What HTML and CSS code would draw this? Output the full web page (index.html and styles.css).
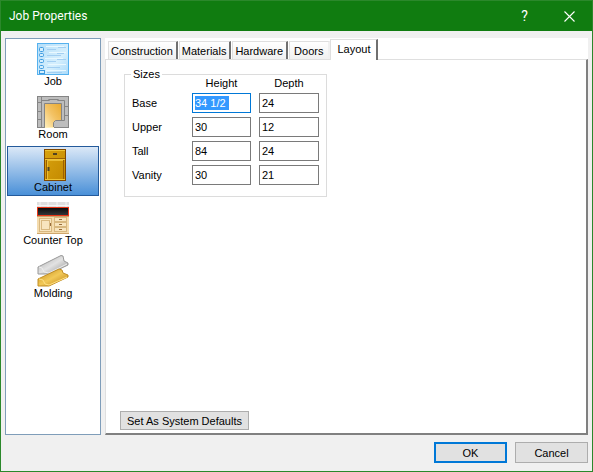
FILE: index.html
```html
<!DOCTYPE html>
<html lang="en">
<head>
<meta charset="utf-8">
<title>Job Properties</title>
<link rel="stylesheet" href="styles.css">
</head>
<body>
<main class="window">
  <header class="titlebar">
    <h1 class="title">Job Properties</h1>
    <button class="caption-button" type="button">?</button>
    <button class="caption-button" type="button" aria-label="Close">
      <svg width="11" height="11" viewBox="0 0 11 11"><path d="M.5.5l10 10M10.5.5l-10 10" stroke="#fff" stroke-width="1.1"/></svg>
    </button>
  </header>
  <div class="content">
    <nav class="sidebar">
      <button class="item" type="button">
        <svg class="icon" viewBox="0 0 32 32">
          <defs><linearGradient id="sheet" x2="1" y2="1"><stop stop-color="#b4def9"/><stop offset=".6" stop-color="#d5effd"/><stop offset="1" stop-color="#a9dafa"/></linearGradient></defs>
          <rect x=".5" y=".5" width="31" height="31" fill="url(#sheet)" stroke="#55b1ee"/>
          <path d="M10 6.500h9M21 4.500h8M10 12.500h14M20 10.500h7M10 18.500h9M20 16.500h9M10 24.500h13M10 29.500h15" stroke="#a3cff2"/>
          <path d="M9 3.500h18M12 9.500h17M8 15.500h18M11 21.500h18M9 27.500h20" stroke="#e9f8ff"/>
          <g fill="#d5effd" stroke="#3d9be0"><rect x="2.500" y="4.500" width="4" height="4" rx="1"/><rect x="2.500" y="10.500" width="4" height="3" rx="1"/><rect x="2.500" y="16.500" width="4" height="3" rx="1"/><rect x="2.500" y="22.500" width="4" height="3" rx="1"/><rect x="2.500" y="27.500" width="5" height="3"/></g>
        </svg>
        <span>Job</span>
      </button>
      <button class="item" type="button">
        <svg class="icon" viewBox="0 0 32 32">
          <defs><linearGradient id="floor" x1="1" x2="0" y2="1"><stop stop-color="#e9a92c"/><stop offset=".5" stop-color="#f3c366"/><stop offset="1" stop-color="#fff0bd"/></linearGradient></defs>
          <rect x=".5" y=".5" width="31" height="31" fill="#bdbdbd" stroke="#858585"/>
          <path d="M7.500 7.500h17v17h-6l-2 2v5h-9z" fill="url(#floor)" stroke="#858585"/>
          <path d="M4.500 0v32M0 6.500h4M0 15.500h4M0 23.500h4M4 4.500h8v-1h9v1h6.500v20H24M27 10.500h5M27 19.500h5M12 3v2M21 3v2" fill="none" stroke="#858585"/>
          <path d="M8 31.500h9" stroke="#fff0bd"/>
        </svg>
        <span>Room</span>
      </button>
      <button class="item selected" type="button" aria-current="true">
        <svg class="icon" viewBox="0 0 32 32">
          <defs><linearGradient id="wood" x2="1" y2="1"><stop stop-color="#d9a30e"/><stop offset="1" stop-color="#c38900"/></linearGradient></defs>
          <rect x="7.500" y=".5" width="21" height="31" fill="url(#wood)" stroke="#804800"/>
          <path d="M8 1.500h20M8 10.500h20" stroke="#efc332"/>
          <path d="M8 9.500h20M9.500 11v20M26.500 11v20" stroke="#9a6004"/>
          <path d="M10.500 30V11.500H26" fill="none" stroke="#e9bd35"/>
          <rect x="16" y="4" width="4" height="2" fill="#514322"/><path d="M11.500 18v4" stroke="#514322" stroke-width="2"/>
          <path d="M8 30.500h20" stroke="#efc332"/>
        </svg>
        <span>Cabinet</span>
      </button>
      <button class="item" type="button">
        <svg class="icon" viewBox="0 0 32 32">
          <defs><linearGradient id="stone" y2="1" x2="0"><stop stop-color="#050505"/><stop offset="1" stop-color="#393c3e"/></linearGradient></defs>
          <path fill="#dedede" d="M0 0h32v5H0z"/><path d="M3 0v5M11 0v5M20 0v5M29 0v5M0 3.500h32" stroke="#f5f5f5"/>
          <path fill="#f4dbad" d="M0 14h32v18H0z"/>
          <path fill="url(#stone)" d="M0 5h32v9H0z"/>
          <rect x=".5" y="5.500" width="31" height="8" fill="none" stroke="#e93516"/>
          <path d="M0 14.500h32" stroke="#c6a46d"/>
          <g fill="#f8e5bf" stroke="#d8b880"><rect x="2.500" y="16.500" width="12" height="13"/><rect x="4.500" y="18.500" width="8" height="9"/><rect x="17.500" y="15.500" width="12" height="4"/><rect x="17.500" y="20.500" width="12" height="4"/><rect x="17.500" y="25.500" width="12" height="4"/></g>
          <path d="M22 17.500h3M22 22.500h3M22 27.500h3M13.500 21v3" stroke="#976b3b"/>
          <path d="M0 31.500h32" stroke="#cfa66b"/>
        </svg>
        <span>Counter Top</span>
      </button>
      <button class="item" type="button">
        <svg class="icon" viewBox="0 0 32 32">
          <defs><linearGradient id="silver" x2="1" y2="1"><stop stop-color="#a7a7a7"/><stop offset=".5" stop-color="#e2e2e2"/><stop offset="1" stop-color="#8a8a8a"/></linearGradient><linearGradient id="gold" x2="1" y2="1"><stop stop-color="#c28a14"/><stop offset=".5" stop-color="#f2c958"/><stop offset="1" stop-color="#b97c0c"/></linearGradient></defs>
          <path d="M1 12L24 .5l2 .5 1 5 4 2v2L12 19H1z" fill="url(#silver)" stroke="#999"/>
          <path d="M2 12l3 1 2 4 5 1L30 9" fill="none" stroke="#eee"/>
          <path d="M1 24l21-10 3 1 1 3 5 2v2L12 31H1z" fill="url(#gold)" stroke="#c28f27"/>
          <path d="M2 24l4 1 2 4 4 1 18-8" fill="none" stroke="#ffe184"/>
        </svg>
        <span>Molding</span>
      </button>
    </nav>
    <section class="tabs">
      <div class="tab-strip" role="tablist">
        <button class="tab" type="button" role="tab">Construction</button>
        <button class="tab" type="button" role="tab">Materials</button>
        <button class="tab" type="button" role="tab">Hardware</button>
        <button class="tab last" type="button" role="tab">Doors</button>
        <button class="tab active" type="button" role="tab" aria-selected="true">Layout</button>
      </div>
      <div class="panel" role="tabpanel">
        <fieldset class="sizes">
          <legend>Sizes</legend>
          <table>
            <thead><tr><td></td><th scope="col" id="height">Height</th><th scope="col" id="depth">Depth</th></tr></thead>
            <tbody>
              <tr><th scope="row" id="base">Base</th><td><div class="field focused"><input aria-labelledby="base height" value="34 1/2"></div></td><td><div class="field"><input aria-labelledby="base depth" value="24"></div></td></tr>
              <tr><th scope="row" id="upper">Upper</th><td><div class="field"><input aria-labelledby="upper height" value="30"></div></td><td><div class="field"><input aria-labelledby="upper depth" value="12"></div></td></tr>
              <tr><th scope="row" id="tall">Tall</th><td><div class="field"><input aria-labelledby="tall height" value="84"></div></td><td><div class="field"><input aria-labelledby="tall depth" value="24"></div></td></tr>
              <tr><th scope="row" id="vanity">Vanity</th><td><div class="field"><input aria-labelledby="vanity height" value="30"></div></td><td><div class="field"><input aria-labelledby="vanity depth" value="21"></div></td></tr>
            </tbody>
          </table>
        </fieldset>
        <button class="button defaults" type="button">Set As System Defaults</button>
      </div>
    </section>
  </div>
  <footer class="actions">
    <button class="button primary" type="button">OK</button>
    <button class="button" type="button">Cancel</button>
  </footer>
</main>
</body>
</html>
```
FILE: styles.css
```css
* { box-sizing: border-box; }
body { margin: 0; font: 11px/14px "Liberation Sans", Arial, sans-serif; color: #000; }
button, input { font: inherit; color: inherit; }
.window {
  display: flex;
  flex-direction: column;
  min-height: 100vh;
  border: 1px solid #2b882b;
  background: #f0f0f0;
}
.titlebar { display: flex; height: 30px; background: #107c10; color: #fff; }
.title { flex: 1; margin: 0; padding-left: 8px; font: 12px/30px Roboto, sans-serif; }
.caption-button {
  display: grid;
  place-items: center;
  width: 45px;
  padding: 0;
  border: 0;
  background: none;
  font: 14px/28px Roboto, sans-serif;
}
.content { display: flex; flex: 1; gap: 4px; padding: 7px 4px 0; }
.sidebar {
  display: flex;
  flex-direction: column;
  gap: 3px;
  width: 96px;
  padding: 1px;
  border: 1px solid #7f9db9;
  background: #fff;
}
.item {
  display: flex;
  flex-direction: column;
  align-items: center;
  height: 50px;
  padding: 2px 0 0;
  border: 1px solid transparent;
  background: none;
  line-height: 13px;
}
.selected { border-color: #245a9b; background: linear-gradient(#dbe8f7, #4a90d8); }
.icon { display: block; width: 32px; height: 32px; flex: none; }
.tabs { display: flex; flex: 1; flex-direction: column; background: #fff; }
.tab-strip { display: flex; align-items: flex-end; height: 21px; padding-left: 3px; }
.tab {
  height: 18px;
  padding: 0 3px 0 2px;
  margin-right: 1px;
  border: 0 solid #dfdfdf;
  border-width: 1px 2px 0 1px;
  border-right-color: #707070;
  background: linear-gradient(#fff, #f0f0f0);
}
.last { padding: 0 5px 0 4px; border-right-color: #f0f0f0; margin-right: 0; }
.active {
  height: 21px;
  margin: 0 0 -1px;
  padding: 0 6px 2px 6px;
  background: #fff;
  z-index: 1;
}
.panel {
  display: flex;
  flex: 1;
  flex-direction: column;
  align-items: flex-start;
  padding: 9px 14px 3px;
  border: 1px solid #dfdfdf;
  border-right: 2px solid #808080;
  border-bottom: 2px solid #808080;
}
.sizes { margin: 0 0 0 4px; padding: 0 7px 7px; border: 1px solid #dcdcdc; }
legend { padding: 0 2px; margin-left: -1px; line-height: 10px; }
table { border-collapse: collapse; }
th, td { padding: 0; font-weight: normal; }
thead th { height: 14px; line-height: 8px; padding-right: 8px; vertical-align: top; }
tbody th { width: 60px; text-align: left; }
.field {
  display: flex;
  align-items: center;
  width: 59px;
  height: 20px;
  margin: 0 8px 4px 0;
  padding: 0 2px;
  border: 1px solid #7a7a7a;
}
td:last-child .field { width: 60px; margin-right: 0; }
thead th:last-child { padding-right: 0; }
tbody th { padding-bottom: 4px; }
input { width: 100%; padding: 0; border: 0; outline: 0; background: none; line-height: 14px; }
.focused { border-color: #0078d7; }
.focused input { width: 34px; background: #3399ff; color: #fff; }
.button {
  width: 73px;
  height: 21px;
  padding: 0;
  border: 1px solid #adadad;
  background: #e1e1e1;
}
.defaults { width: 129px; height: 19px; margin-top: auto; }
.primary { border: 2px solid #0078d7; }
.actions { display: flex; justify-content: flex-end; gap: 8px; padding: 7px 4px 8px; }
```
